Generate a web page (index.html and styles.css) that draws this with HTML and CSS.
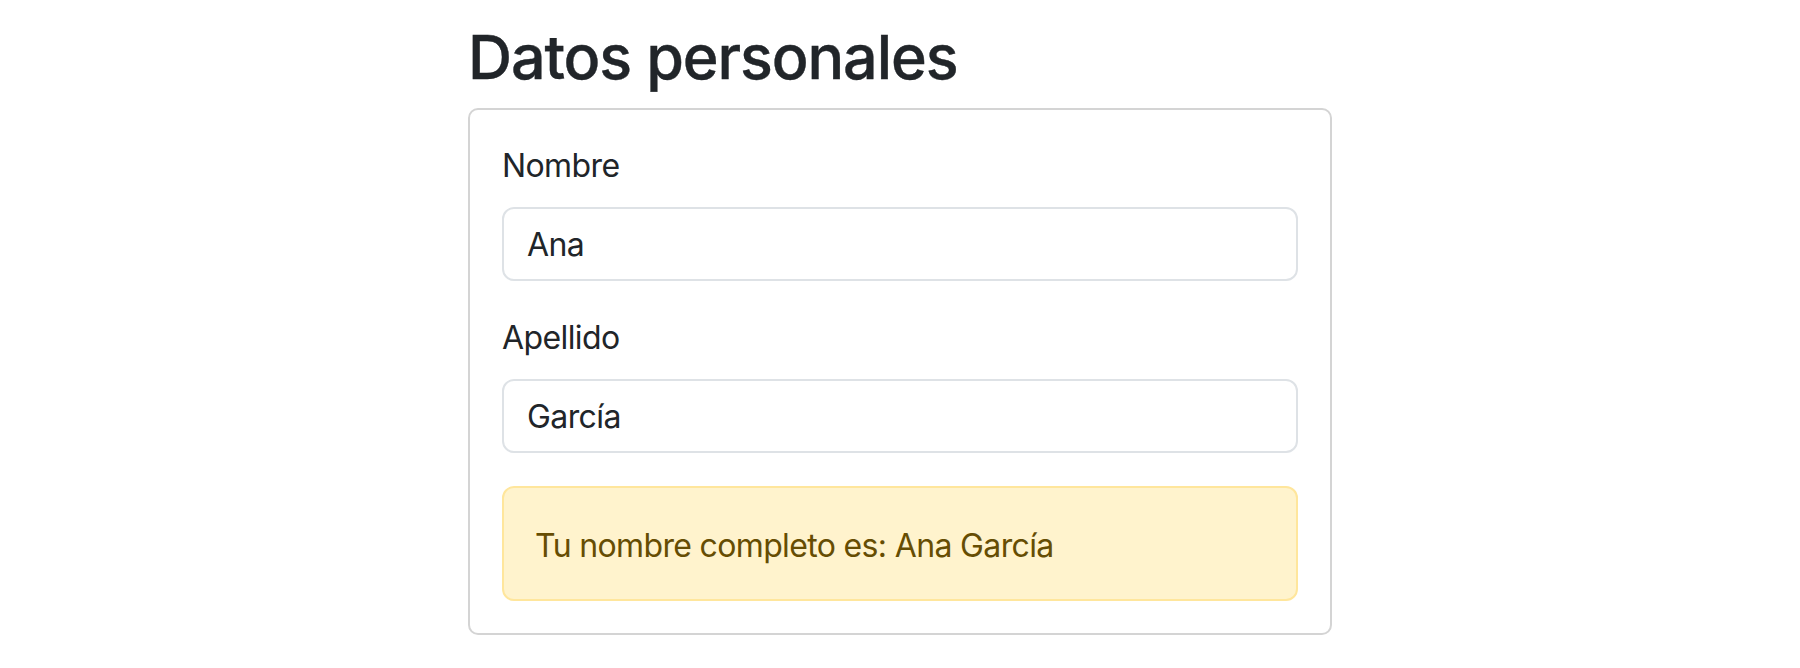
FILE: index.html
```html
<!DOCTYPE html>
<html lang="es">
<head>
<meta charset="utf-8">
<title>Datos personales</title>
<link rel="stylesheet" href="styles.css">
</head>
<body>
<main class="container">
  <h1 class="title">Datos personales</h1>
  <section class="card">
    <div class="field">
      <label class="label" for="nombre">Nombre</label>
      <input class="input" id="nombre" type="text" value="Ana">
    </div>
    <div class="field">
      <label class="label" for="apellido">Apellido</label>
      <input class="input" id="apellido" type="text" value="García">
    </div>
    <div class="alert">Tu nombre completo es: Ana García</div>
  </section>
</main>
</body>
</html>
```

FILE: styles.css
```css
* { box-sizing: border-box; }

html, body {
  margin: 0;
  padding: 0;
  background: #ffffff;
}

body {
  font-family: Inter, "Liberation Sans", sans-serif;
  color: #212529;
}

.container {
  width: 864px;
  margin: 0 auto;
  padding-top: 21px;
}

.title {
  margin: 0 0 14px 0;
  font-size: 61px;
  font-weight: 500;
  line-height: 1.2;
  color: #212529;
  letter-spacing: -1.1px;
  -webkit-text-stroke: 0.4px #212529;
}

.card {
  border: 2px solid #d4d4d4;
  border-radius: 10px;
  padding: 32px;
  display: flex;
  flex-direction: column;
}

.field {
  display: flex;
  flex-direction: column;
  margin-bottom: 33px;
}

.label {
  font-size: 32px;
  line-height: 48px;
  margin-bottom: 17px;
  color: #212529;
  letter-spacing: -0.6px;
}

.input {
  font-family: inherit;
  font-size: 32px;
  line-height: 48px;
  height: 74px;
  padding: 11px 23px;
  border: 2px solid #dee2e6;
  border-radius: 12px;
  color: #212529;
  background: #ffffff;
  outline: none;
  width: 100%;
  letter-spacing: -0.6px;
}

.alert {
  font-size: 32px;
  line-height: 48px;
  padding: 34px 31px 29px 31px;
  border: 2px solid #ffe69c;
  border-radius: 12px;
  background: #fff3cd;
  color: #664d03;
  letter-spacing: -0.65px;
}
```
